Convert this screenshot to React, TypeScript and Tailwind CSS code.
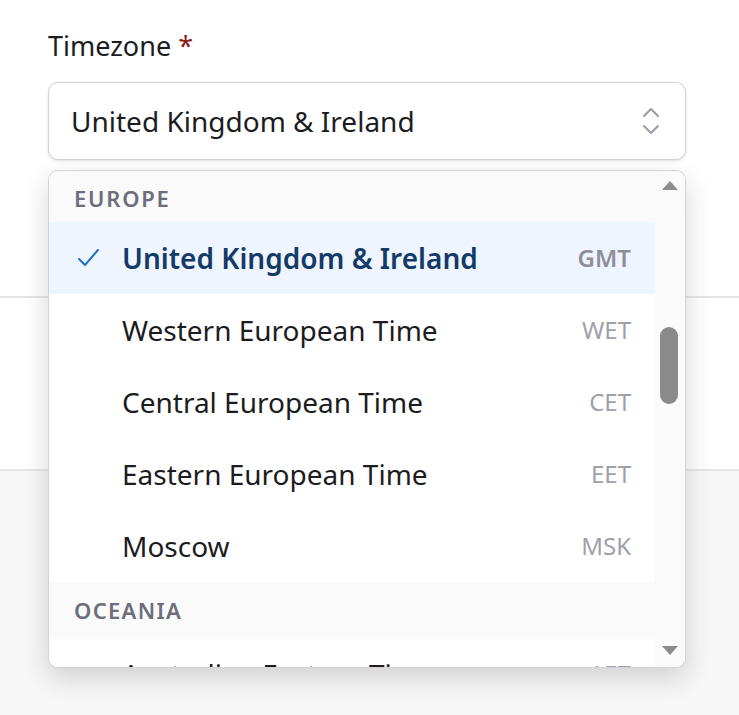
import React from 'react';

const europe = [
  { name: 'United Kingdom & Ireland', abbr: 'GMT', selected: true },
  { name: 'Western European Time', abbr: 'WET' },
  { name: 'Central European Time', abbr: 'CET' },
  { name: 'Eastern European Time', abbr: 'EET' },
  { name: 'Moscow', abbr: 'MSK' },
];

function Check() {
  return (
    <svg width="24" height="24" viewBox="0 0 24 24" fill="none" stroke="#1f6fc5" strokeWidth="2" strokeLinecap="round" strokeLinejoin="round">
      <path d="M2 13l6 6L21 4" />
    </svg>
  );
}

function Chevrons() {
  return (
    <svg width="20" height="30" viewBox="0 0 20 30" fill="none" stroke="#9b9ba6" strokeWidth="2" strokeLinecap="round" strokeLinejoin="round">
      <path d="M3 10l7-7 7 7" />
      <path d="M3 20l7 7 7-7" />
    </svg>
  );
}

export default function App() {
  return (
    <div className="relative min-h-[715px] bg-[#f7f7f8] font-['Noto_Sans',sans-serif]">
      {/* Form section */}
      <div className="bg-white border-b-2 border-[#e6e6e8] pl-12 pr-[53px] pt-[26px] h-[298px]">
        <label className="block text-[27px] leading-[40px] text-[#1c1c1f]">
          Timezone <span className="text-[#8b1a1a]">*</span>
        </label>
        <div className="relative mt-[16px]">
          <button className="flex w-full h-[78px] items-center justify-between rounded-[10px] border-[1.5px] border-[#d2d2d8] bg-white pl-[22px] pr-[24px] shadow-[0_1px_3px_rgba(0,0,0,0.12)]">
            <span className="text-[28px] text-[#1c1c1f]">United Kingdom &amp; Ireland</span>
            <Chevrons />
          </button>

          {/* Dropdown */}
          <div className="absolute left-0 right-0 top-[88px] z-10 flex h-[498px] overflow-hidden rounded-[10px] border-[1.5px] border-[#d2d2d8] bg-white shadow-[0_10px_28px_rgba(0,0,0,0.16)]">
            <div className="flex-1 overflow-hidden">
              <div className="flex h-[51px] items-center bg-[#fafafa] px-[25px] pt-[4px] text-[22px] font-semibold tracking-[0.08em] text-[#6e6e7a]">
                EUROPE
              </div>
              {europe.map((tz) => (
                <div
                  key={tz.abbr}
                  className={`flex h-[72px] items-center justify-between pr-[24px] ${tz.selected ? 'bg-[#eef5ff]' : 'bg-white'}`}
                >
                  <div className="flex items-center">
                    <span className="flex w-[73px] justify-end pr-[21px]">{tz.selected && <Check />}</span>
                    <span className={`text-[28px] ${tz.selected ? 'font-semibold text-[#143a68]' : 'text-[#1c1c1f]'}`}>
                      {tz.name}
                    </span>
                  </div>
                  <span className={`text-[24px] ${tz.selected ? 'font-semibold text-[#8e8e98]' : 'text-[#a0a0aa]'}`}>
                    {tz.abbr}
                  </span>
                </div>
              ))}
              <div className="flex h-[56px] items-center bg-[#fafafa] px-[25px] text-[22px] font-semibold tracking-[0.06em] text-[#6e6e7a]">
                OCEANIA
              </div>
              <div className="flex h-[72px] items-center justify-between bg-white pr-[24px]">
                <span className="pl-[73px] text-[28px] text-[#1c1c1f]">Australian Eastern Time</span>
                <span className="text-[24px] text-[#a0a0aa]">AET</span>
              </div>
            </div>
            {/* Scrollbar */}
            <div className="relative w-[30px] bg-[#fafafa]">
              <div className="absolute left-[7px] top-[10px] h-0 w-0 border-x-[8px] border-b-[9px] border-x-transparent border-b-[#8c8c8c]" />
              <div className="absolute left-[5px] top-[156px] h-[77px] w-[18px] rounded-full bg-[#8a8a8a]" />
              <div className="absolute bottom-[12px] left-[7px] h-0 w-0 border-x-[8px] border-t-[9px] border-x-transparent border-t-[#8c8c8c]" />
            </div>
          </div>
        </div>
      </div>
      <div className="h-[173px] border-b-2 border-[#e6e6e8] bg-white" />
    </div>
  );
}
